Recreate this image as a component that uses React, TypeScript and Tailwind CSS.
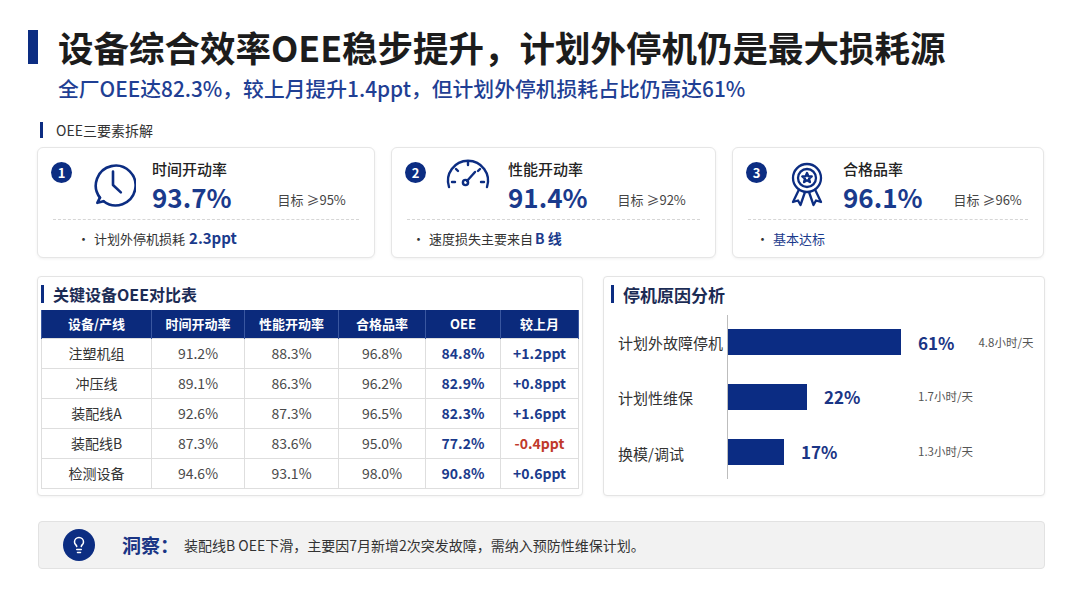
import React from "react";
import { Lightbulb } from "lucide-react";

const NAVY = "#0c2d82";

function ClockIcon() {
  return (
    <svg width="46" height="46" viewBox="0 0 44 44" fill="none" stroke={NAVY} strokeWidth="2.5" strokeLinecap="round" strokeLinejoin="round">
      <path d="M9.5 35 A19 19 0 1 1 13 38.5" />
      <path d="M9.5 35 L7 40 L13 38.5" />
      <path d="M22 10 V23 L29.5 30" />
    </svg>
  );
}

function GaugeIcon() {
  return (
    <svg width="48" height="36" viewBox="0 0 48 36" fill="none" stroke={NAVY} strokeWidth="2.4" strokeLinecap="round" strokeLinejoin="round">
      <path d="M5 30 A20 20 0 1 1 43 30" />
      <path d="M8 25 L11 25" />
      <path d="M12 12 L14 14" />
      <path d="M24 5 V8" />
      <path d="M36 12 L34 14" />
      <path d="M40 25 L37 25" />
      <path d="M23 24 L31 15" />
      <circle cx="21.5" cy="25.5" r="2.6" />
    </svg>
  );
}

function MedalIcon() {
  return (
    <svg width="40" height="48" viewBox="0 0 40 48" fill="none" stroke={NAVY} strokeWidth="2.3" strokeLinecap="round" strokeLinejoin="round">
      <circle cx="20" cy="18" r="14" />
      <circle cx="20" cy="18" r="9" />
      <path d="M20 13 L21.29 16.22 L24.76 16.45 L22.09 18.68 L22.94 22.05 L20 20.2 L17.06 22.05 L17.91 18.68 L15.24 16.45 L18.71 16.22 Z" />
      <path d="M12 29.5 L6 42 L11 40.5 L13.5 45 L18 32" />
      <path d="M28 29.5 L34 42 L29 40.5 L26.5 45 L22 32" />
    </svg>
  );
}

type Card = {
  n: string;
  icon: React.ReactNode;
  iconBox: string;
  title: string;
  value: string;
  target: string;
  targetMl: string;
  width: string;
  bulletPl: string;
  bullet: React.ReactNode;
};

const cards: Card[] = [
  {
    n: "1",
    icon: <ClockIcon />,
    iconBox: "ml-[18px] mt-[0px]",
    title: "时间开动率",
    value: "93.7%",
    target: "目标 ≥95%",
    targetMl: "ml-[46px]",
    width: "w-[338px]",
    bulletPl: "pl-[39px]",
    bullet: (
      <>
        计划外停机损耗 <span className="ml-1 text-[15px] font-bold text-[#1a3a8c]">2.3ppt</span>
      </>
    ),
  },
  {
    n: "2",
    icon: <GaugeIcon />,
    iconBox: "ml-[18px] -mt-[4px]",
    title: "性能开动率",
    value: "91.4%",
    target: "目标 ≥92%",
    targetMl: "ml-[30px]",
    width: "w-[325px]",
    bulletPl: "pl-[20px]",
    bullet: (
      <>
        速度损失主要来自 <span className="ml-0.5 text-[14px] font-bold text-[#1a3a8c]">B 线</span>
      </>
    ),
  },
  {
    n: "3",
    icon: <MedalIcon />,
    iconBox: "ml-[20px] -mt-[1px]",
    title: "合格品率",
    value: "96.1%",
    target: "目标 ≥96%",
    targetMl: "ml-[31px]",
    width: "w-[312px]",
    bulletPl: "pl-[23px]",
    bullet: <span className="text-[#1a3a8c]">基本达标</span>,
  },
];

const rows = [
  ["注塑机组", "91.2%", "88.3%", "96.8%", "84.8%", "+1.2ppt"],
  ["冲压线", "89.1%", "86.3%", "96.2%", "82.9%", "+0.8ppt"],
  ["装配线A", "92.6%", "87.3%", "96.5%", "82.3%", "+1.6ppt"],
  ["装配线B", "87.3%", "83.6%", "95.0%", "77.2%", "-0.4ppt"],
  ["检测设备", "94.6%", "93.1%", "98.0%", "90.8%", "+0.6ppt"],
];

const bars = [
  { label: "计划外故障停机", w: "w-[173px]", pct: "61%", hrs: "4.8小时/天" },
  { label: "计划性维保", w: "w-[79px]", pct: "22%", hrs: "1.7小时/天" },
  { label: "换模/调试", w: "w-[56px]", pct: "17%", hrs: "1.3小时/天" },
];

export default function App() {
  return (
    <div
      className="w-[1080px] h-[608px] bg-white overflow-hidden"
      style={{ fontFamily: '"Noto Sans CJK SC", "Noto Sans", sans-serif' }}
    >
      {/* Title */}
      <div className="ml-[28px] mt-[26px] h-[42px] flex items-center gap-[20px]">
        <div className="w-[10px] h-[34px] bg-[#0c2d82]" />
        <div className="text-[35.5px] font-bold text-[#1c1c1c] leading-none whitespace-nowrap">
          设备综合效率OEE稳步提升，计划外停机仍是最大损耗源
        </div>
      </div>
      <div className="ml-[58px] mt-[6px] h-[28px] flex items-center text-[20.8px] font-medium text-[#1f3f94] leading-none whitespace-nowrap">
        全厂OEE达82.3%，较上月提升1.4ppt，但计划外停机损耗占比仍高达61%
      </div>

      {/* Section heading */}
      <div className="ml-[40px] mt-[18px] h-[20px] flex items-center gap-[13px]">
        <div className="w-[3px] h-[16px] bg-[#0c2d82]" />
        <div className="text-[14px] text-[#333] leading-none">OEE三要素拆解</div>
      </div>

      {/* Cards */}
      <div className="ml-[37px] mt-[7px] flex gap-[16px]">
        {cards.map((c) => (
          <div
            key={c.n}
            className={`${c.width} h-[111px] rounded-md border border-[#e6e6e6] bg-white shadow-[0_1px_3px_rgba(0,0,0,0.06)] flex flex-col`}
          >
            <div className="mx-[15px] h-[72px] border-b border-dashed border-[#d6d6d6] flex">
              <div className="pt-[14px] -ml-[2px]">
                <div className="w-[21px] h-[21px] rounded-full bg-[#0c2d82] text-white text-[13px] font-bold flex items-center justify-center leading-none">
                  {c.n}
                </div>
              </div>
              <div className={`${c.iconBox} pt-[13px]`}>{c.icon}</div>
              <div className="ml-[16px] pt-[11px] flex flex-col">
                <div className="text-[15px] h-[20px] leading-[20px] text-[#222] font-medium">{c.title}</div>
                <div className="flex items-end mt-[2px]">
                  <div className="text-[26px] font-bold leading-[32px] text-[#1a3a8c]">{c.value}</div>
                  <div className={`${c.targetMl} text-[13px] text-[#444] leading-[26px]`}>{c.target}</div>
                </div>
              </div>
            </div>
            <div className={`flex-1 flex items-center ${c.bulletPl} text-[13px] text-[#333]`}>
              <span className="mr-[4px] text-[#333]">•</span>
              {c.bullet}
            </div>
          </div>
        ))}
      </div>

      {/* Panels */}
      <div className="ml-[37px] mt-[18px] flex gap-[20px]">
        {/* Table */}
        <div className="w-[546px] h-[220px] rounded-sm border border-[#e4e4e4] bg-white shadow-[0_1px_3px_rgba(0,0,0,0.05)] px-[3px]">
          <div className="h-[32px] flex items-center gap-[9px] pt-[2px]">
            <div className="w-[3px] h-[18px] bg-[#0c2d82]" />
            <div className="text-[16px] font-bold text-[#1c2c55] leading-none">关键设备OEE对比表</div>
          </div>
          <table className="mt-[1px] w-[537px] table-fixed border-collapse">
            <colgroup>
              <col className="w-[110px]" />
              <col className="w-[93px]" />
              <col className="w-[94px]" />
              <col className="w-[87px]" />
              <col className="w-[75px]" />
              <col className="w-[78px]" />
            </colgroup>
            <thead>
              <tr className="h-[28px] bg-[#0b2a7c]">
                {["设备/产线", "时间开动率", "性能开动率", "合格品率", "OEE", "较上月"].map((h) => (
                  <th key={h} className="text-white text-[13px] font-bold text-center border-x border-[#3a57a0] p-0">
                    {h}
                  </th>
                ))}
              </tr>
            </thead>
            <tbody>
              {rows.map((r) => (
                <tr key={r[0]} className="h-[30px]">
                  <td className="border border-[#dedede] text-center text-[14px] text-[#333] p-0">{r[0]}</td>
                  <td className="border border-[#dedede] text-center text-[14px] text-[#4a4a4a] p-0">{r[1]}</td>
                  <td className="border border-[#dedede] text-center text-[14px] text-[#4a4a4a] p-0">{r[2]}</td>
                  <td className="border border-[#dedede] text-center text-[14px] text-[#4a4a4a] p-0">{r[3]}</td>
                  <td className="border border-[#dedede] text-center text-[14px] font-bold text-[#1a3a8c] p-0">{r[4]}</td>
                  <td
                    className={`border border-[#dedede] text-center text-[14px] font-bold p-0 ${
                      r[5].startsWith("-") ? "text-[#c0392b]" : "text-[#1a3a8c]"
                    }`}
                  >
                    {r[5]}
                  </td>
                </tr>
              ))}
            </tbody>
          </table>
        </div>

        {/* Chart */}
        <div className="w-[442px] h-[220px] rounded-sm border border-[#e4e4e4] bg-white shadow-[0_1px_3px_rgba(0,0,0,0.05)] pl-[7px]">
          <div className="h-[32px] flex items-center gap-[9px] pt-[2px]">
            <div className="w-[3px] h-[18px] bg-[#0c2d82]" />
            <div className="text-[17px] font-bold text-[#1c2c55] leading-none">停机原因分析</div>
          </div>
          <div className="flex mt-[6px]">
            <div className="w-[116px] flex flex-col pl-[7px]">
              {bars.map((b) => (
                <div key={b.label} className="h-[55.5px] flex items-center text-[15px] text-[#333]">
                  {b.label}
                </div>
              ))}
            </div>
            <div className="border-l-[1.5px] border-[#bdbdbd] h-[164px] flex flex-col">
              {bars.map((b) => (
                <div key={b.label} className="h-[55.5px] flex items-center">
                  <div className="min-w-[166px] flex items-center">
                    <div className={`${b.w} h-[26px] bg-[#0b2c83]`} />
                    <div className="ml-[17px] text-[17px] font-bold text-[#1a3585]">{b.pct}</div>
                  </div>
                  <div className="ml-[24px] text-[11.5px] text-[#555]">{b.hrs}</div>
                </div>
              ))}
            </div>
          </div>
        </div>
      </div>

      {/* Insight */}
      <div className="ml-[38px] mt-[25px] w-[1007px] h-[48px] rounded-sm border border-[#e2e2e2] bg-[#f2f2f2] flex items-center">
        <div className="ml-[24px] w-[32px] h-[32px] rounded-full bg-[#0c2d82] flex items-center justify-center">
          <Lightbulb size={18} color="white" strokeWidth={2} />
        </div>
        <div className="ml-[27px] text-[19px] font-bold text-[#1a3585]">洞察：</div>
        <div className="ml-[5px] text-[14px] text-[#333]">
          装配线B OEE下滑，主要因7月新增2次突发故障，需纳入预防性维保计划。
        </div>
      </div>
    </div>
  );
}
